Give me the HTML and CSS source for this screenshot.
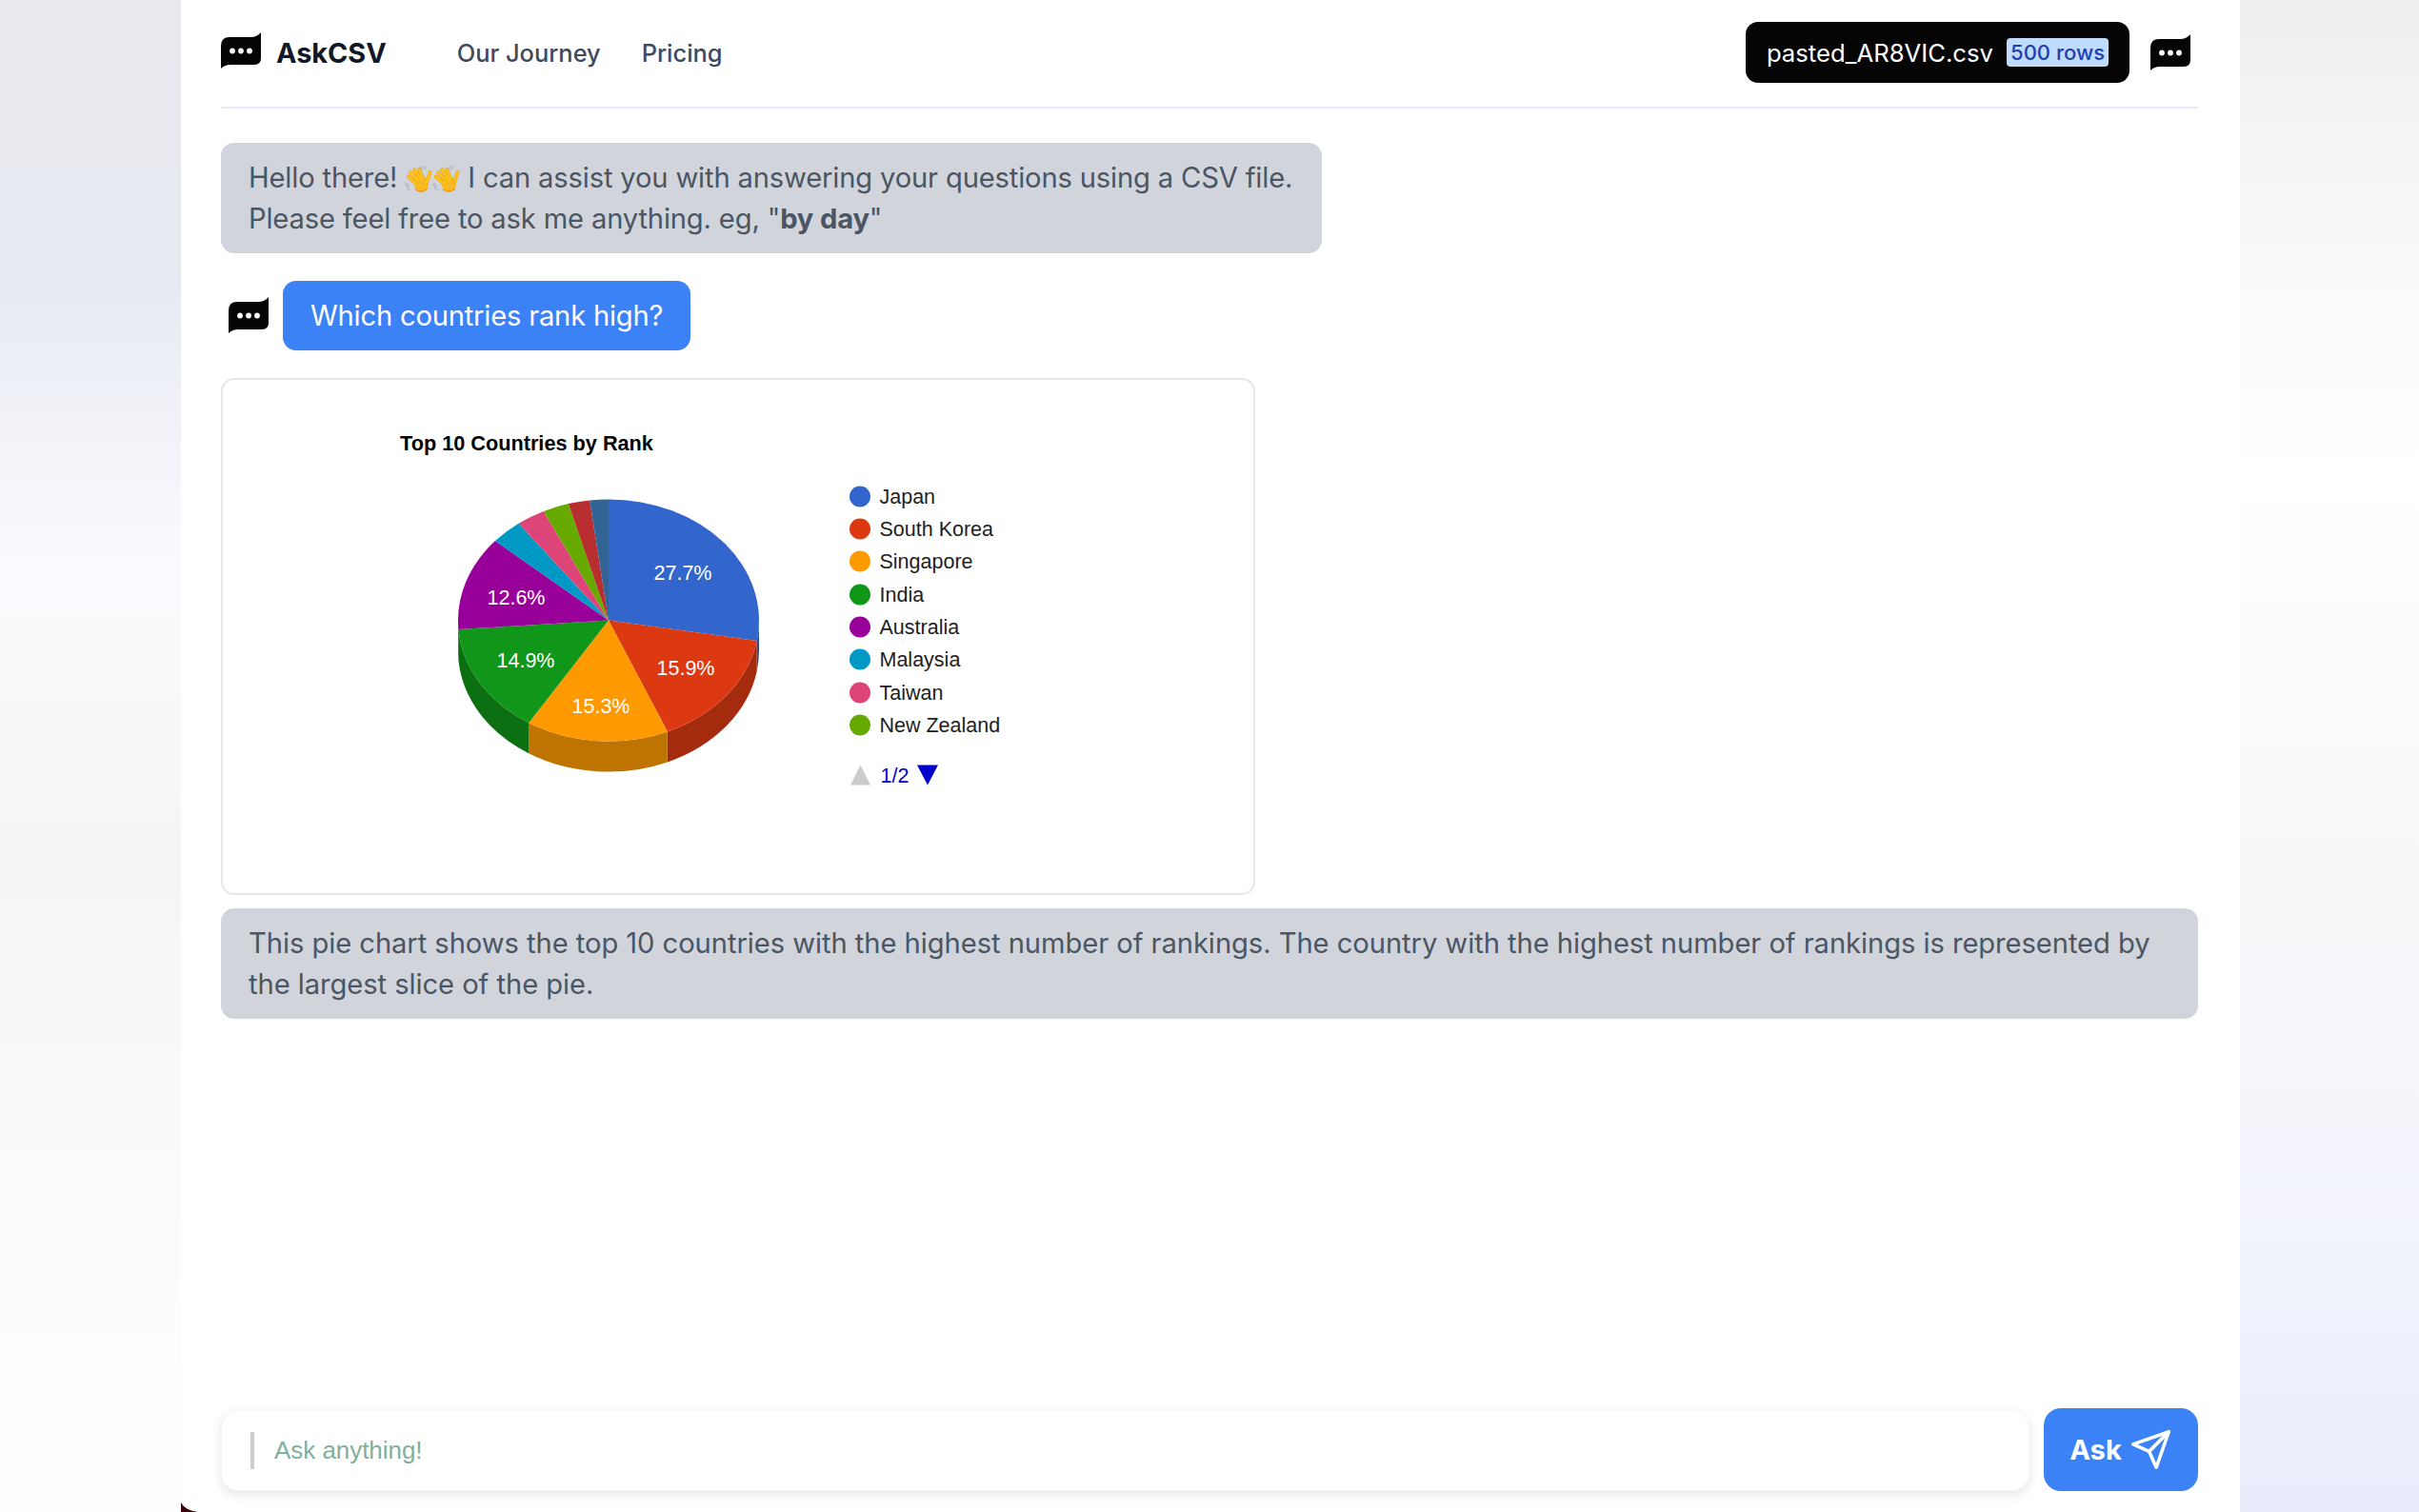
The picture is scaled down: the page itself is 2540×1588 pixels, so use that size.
FILE: index.html
```html
<!DOCTYPE html>
<html lang="en">
<head>
<meta charset="utf-8">
<title>AskCSV</title>
<link rel="stylesheet" href="styles.css">
</head>
<body>
<svg class="defs" width="0" height="0" aria-hidden="true">
  <symbol id="logo" viewBox="0 0 42 38">
    <path d="M0 14Q0 5 9 5L31 5Q38 5 42 0L42 27Q42 34 35 34L10 34Q4 34 0 38Z" fill="#050505"/>
    <circle cx="12" cy="19.5" r="2.9" fill="#fff"/><circle cx="21" cy="19.5" r="2.9" fill="#fff"/><circle cx="30" cy="19.5" r="2.9" fill="#fff"/>
  </symbol>
  <symbol id="wave" viewBox="0 0 30 30">
    <g fill="none" stroke="#9a9a9a" stroke-width=".8" stroke-linecap="round">
      <path d="M16.5 2.5L19.5 5.5M18.5 1L22 4.5M21 .5L23.5 3"/>
      <path d="M.5 20.5L3.5 24M1.5 19L5 23M2.5 24.5L5.5 27.5"/>
    </g>
    <ellipse cx="18" cy="20.5" rx="7.8" ry="8.6" fill="#fbb91d"/>
    <g fill="none" stroke-linecap="round">
      <path d="M3.8 12.5L13 20.5M6.5 8L14.5 17M10.5 5L17 15.5M15.5 5L20 15.5" stroke="#ec9a10" stroke-width="4"/>
      <path d="M3.8 12.5L13 20.5M6.5 8L14.5 17M10.5 5L17 15.5M15.5 5L20 15.5" stroke="#fcc41d" stroke-width="3"/>
      <path d="M27.5 7.5L24 18" stroke="#ec9a10" stroke-width="4"/>
      <path d="M27.5 7.5L24 18" stroke="#fcc41d" stroke-width="3"/>
    </g>
    <ellipse cx="18" cy="21" rx="6.6" ry="7.2" fill="#fbbb1e"/>
    <path d="M11.5 26.5Q18 31 24.5 25.5" fill="none" stroke="#ee8f0e" stroke-width="1.2" stroke-linecap="round"/>
  </symbol>
</svg>

<div class="side side-left"></div>

<main class="panel">
  <header class="topbar">
    <svg class="logo logo-brand" width="42" height="38"><use href="#logo"/></svg>
    <span class="brand">AskCSV</span>
    <nav class="nav">
      <a class="nav-link">Our Journey</a>
      <a class="nav-link">Pricing</a>
    </nav>
    <div class="topbar-right">
      <div class="file-pill">
        <span>pasted_AR8VIC.csv</span>
        <span class="rows-badge">500 rows</span>
      </div>
      <svg class="logo" width="42" height="38"><use href="#logo"/></svg>
    </div>
  </header>

  <section class="chat">
    <div class="bubble bubble-bot bubble-intro">Hello there! <svg class="emoji" width="29" height="30"><use href="#wave"/></svg><svg class="emoji" width="29" height="30"><use href="#wave"/></svg> I can assist you with answering your questions using a CSV file. Please feel free to ask me anything. eg, "<strong>by day</strong>"</div>

    <div class="user-row">
      <svg class="logo" width="42" height="38"><use href="#logo"/></svg>
      <div class="bubble bubble-user">Which countries rank high?</div>
    </div>

    <div class="chart-card">
      <svg class="chart" width="1082" height="539" viewBox="234 399.5 1082 539">
        <text class="chart-title" x="420" y="473">Top 10 Countries by Rank</text>

        <g transform="translate(-1 0)">
          <path fill="#264d99" d="M798 652A158 127 0 0 1 795.7 673.4L795.7 705.4A158 127 0 0 0 798 684Z"/>
          <path fill="#a52b0e" d="M795.7 673.4A158 127 0 0 1 701.8 768.9L701.8 800.9A158 127 0 0 0 795.7 705.4Z"/>
          <path fill="#bf7300" d="M701.8 768.9A158 127 0 0 1 556.2 759.7L556.2 791.7A158 127 0 0 0 701.8 800.9Z"/>
          <path fill="#0c7012" d="M556.2 759.7A158 127 0 0 1 482.4 661.6L482.4 693.6A158 127 0 0 0 556.2 791.7Z"/>
          <path fill="#730073" d="M482.4 661.6A158 127 0 0 1 482 652L482 684A158 127 0 0 0 482.4 693.6Z"/>

          <path fill="#3366cc" d="M640 652L640 525A158 127 0 0 1 795.7 673.4Z"/>
          <path fill="#dc3912" d="M640 652L795.7 673.4A158 127 0 0 1 701.8 768.9Z"/>
          <path fill="#ff9900" d="M640 652L701.8 768.9A158 127 0 0 1 556.2 759.7Z"/>
          <path fill="#109618" d="M640 652L556.2 759.7A158 127 0 0 1 482.4 661.6Z"/>
          <path fill="#990099" d="M640 652L482.4 661.6A158 127 0 0 1 520.9 568.6Z"/>
          <path fill="#0099c6" d="M640 652L520.9 568.6A158 127 0 0 1 545.5 550.2Z"/>
          <path fill="#dd4477" d="M640 652L545.5 550.2A158 127 0 0 1 571.8 537.4Z"/>
          <path fill="#66aa00" d="M640 652L571.8 537.4A158 127 0 0 1 597.8 529.6Z"/>
          <path fill="#b82e2e" d="M640 652L597.8 529.6A158 127 0 0 1 620.2 526Z"/>
          <path fill="#316395" d="M640 652L620.2 526A158 127 0 0 1 640 525Z"/>
        </g>

        <text class="pie-label" x="717" y="609">27.7%</text>
        <text class="pie-label" x="720" y="709">15.9%</text>
        <text class="pie-label" x="631" y="749">15.3%</text>
        <text class="pie-label" x="552" y="701">14.9%</text>
        <text class="pie-label" x="542" y="635">12.6%</text>

        <circle cx="903" cy="522" r="11" fill="#3366cc"/><text class="legend" x="923.5" y="529">Japan</text>
        <circle cx="903" cy="556" r="11" fill="#dc3912"/><text class="legend" x="923.5" y="563">South Korea</text>
        <circle cx="903" cy="590" r="11" fill="#ff9900"/><text class="legend" x="923.5" y="597">Singapore</text>
        <circle cx="903" cy="625" r="11" fill="#109618"/><text class="legend" x="923.5" y="632">India</text>
        <circle cx="903" cy="659" r="11" fill="#990099"/><text class="legend" x="923.5" y="666">Australia</text>
        <circle cx="903" cy="693" r="11" fill="#0099c6"/><text class="legend" x="923.5" y="700">Malaysia</text>
        <circle cx="903" cy="728" r="11" fill="#dd4477"/><text class="legend" x="923.5" y="735">Taiwan</text>
        <circle cx="903" cy="762" r="11" fill="#66aa00"/><text class="legend" x="923.5" y="769">New Zealand</text>

        <path fill="#cccccc" d="M893 825L903.5 804L914 825Z"/>
        <text class="pager" x="924.5" y="822">1/2</text>
        <path fill="#0000cc" d="M963 804L985 804L974 825Z"/>
      </svg>
    </div>

    <div class="bubble bubble-bot bubble-full">This pie chart shows the top 10 countries with the highest number of rankings. The country with the highest number of rankings is represented by the largest slice of the pie.</div>
  </section>

  <form class="composer">
    <div class="input-box">
      <input class="ask-input" type="text" placeholder="Ask anything!">
    </div>
    <button class="ask-btn" type="button">
      <span>Ask</span>
      <svg width="45" height="45" viewBox="0 0 24 24" fill="none" stroke="#fff" stroke-width="1.9" stroke-linecap="round" stroke-linejoin="round"><line x1="22" y1="2" x2="11" y2="13"/><polygon points="22 2 15 22 11 13 2 9 22 2"/></svg>
    </button>
  </form>

  <svg class="corner" width="18" height="10" viewBox="0 0 18 10"><path d="M0 0Q4 8 18 10L0 10Z" fill="#3d0508"/></svg>
</main>

<div class="side side-right"></div>
</body>
</html>
```
FILE: styles.css
```css
* { box-sizing: border-box; }
html, body { margin: 0; height: 100%; }
body {
  display: grid;
  grid-template-columns: 190px 2162px 188px;
  height: 1588px;
  overflow: hidden;
  font-family: Inter, "Liberation Sans", sans-serif;
  background: #fff;
}
.defs { position: absolute; }
.side-left {
  background: linear-gradient(180deg, #e8eaee 0, #e8eaf3 300px, #fafbfe 600px, #f5f5f6 900px, #fafafb 1200px, #fefefe 1500px);
}
.side-right {
  background: linear-gradient(180deg, #eeeeef 0, #fafafa 300px, #ffffff 500px, #f8f8f9 900px, #f4f5fc 1200px, #e9edfb 1588px);
}
.panel {
  position: relative;
  display: flex;
  flex-direction: column;
  height: 1588px;
  padding: 0 44px 22px 42px;
  background: #fff;
}

/* top bar */
.topbar {
  display: flex;
  align-items: center;
  height: 114px;
  padding: 23px 8px 25px 0;
  border-bottom: 2px solid #e8eaf4;
  flex: none;
}
.logo { flex: none; display: block; }
.logo-brand { margin-top: -4px; }
.brand {
  margin-left: 16px;
  font-size: 28.8px;
  font-weight: 700;
  color: #111827;
}
.nav { display: flex; gap: 43px; margin-left: 74px; }
.nav-link { font-size: 25.4px; font-weight: 500; color: #3f4a5c; }
.topbar-right { display: flex; align-items: center; gap: 22px; margin-left: auto; }
.file-pill {
  display: flex;
  align-items: center;
  gap: 14px;
  height: 64px;
  padding: 0 22px;
  background: #050505;
  border-radius: 13px;
  color: #fff;
  font-size: 25.7px;
}
.rows-badge {
  padding: 0 4px;
  height: 30px;
  line-height: 30px;
  border-radius: 4px;
  background: #bfdbfe;
  color: #1e40af;
  font-size: 22px;
  font-weight: 500;
}

/* chat */
.chat {
  flex: 1;
  display: flex;
  flex-direction: column;
  align-items: flex-start;
  padding-top: 36px;
}
.bubble {
  padding: 14.5px 29px;
  border-radius: 14px;
  font-size: 29.16px;
  line-height: 43.5px;
}
.bubble-bot { background: #d1d5db; color: #4b5563; }
.bubble-full { width: 100%; letter-spacing: -.06px; }
.bubble-intro { width: 1156px; letter-spacing: -.16px; }
.bubble-bot strong { font-weight: 700; }
.emoji { display: inline-block; vertical-align: -6px; }
.user-row {
  display: flex;
  align-items: center;
  gap: 15px;
  margin-top: 29px;
  padding-left: 8px;
}
.bubble-user { background: #3b82f6; color: #fff; letter-spacing: -.2px; }

.chart-card {
  width: 1086px;
  height: 543px;
  margin-top: 29px;
  margin-bottom: 14.5px;
  border: 2px solid #e5e7eb;
  border-radius: 14px;
  background: #fff;
  overflow: hidden;
}
.chart { display: block; font-family: "Liberation Sans", Arial, sans-serif; font-size: 21.5px; }
.chart-title { font-weight: 700; font-size: 21.7px; fill: #000; }
.pie-label { fill: #fff; text-anchor: middle; }
.legend { fill: #222; }
.pager { fill: #0000cc; }

/* composer */
.composer { display: flex; gap: 15px; align-items: flex-end; flex: none; }
.input-box {
  flex: 1;
  display: flex;
  align-items: center;
  height: 85px;
  padding: 0 30px;
  background: #fff;
  border-radius: 18px;
  border: 1px solid #f5f5f5;
  box-shadow: 0 4px 12px rgba(0, 0, 0, .1);
}
.ask-input {
  width: 100%;
  height: 39px;
  padding: 0 0 0 21px;
  border: 0;
  border-left: 4px solid #cccccc;
  outline: 0;
  background: transparent;
  font-family: "Liberation Sans", Arial, sans-serif;
  font-size: 25.92px;
}
.ask-input::placeholder { color: #7fb09c; opacity: 1; }
.ask-btn {
  display: flex;
  align-items: center;
  justify-content: center;
  gap: 8px;
  width: 162px;
  height: 87px;
  padding: 0;
  border: 0;
  border-radius: 18px;
  background: #3b82f6;
  color: #fff;
  font-family: Inter, "Liberation Sans", sans-serif;
  font-size: 29.16px;
  font-weight: 700;
}
.corner { position: absolute; left: 0; bottom: 0; }
```
